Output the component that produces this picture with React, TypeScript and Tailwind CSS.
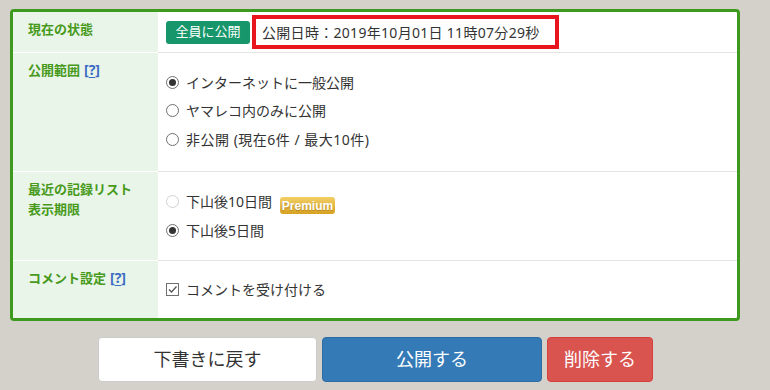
import React from "react";

const font = { fontFamily: '"Noto Sans", "Noto Sans CJK JP", sans-serif' };

function Radio({ checked, disabled }: { checked?: boolean; disabled?: boolean }) {
  return (
    <span
      className={`flex h-[13px] w-[13px] shrink-0 items-center justify-center rounded-full border bg-white ${
        disabled ? "border-[#d0d0d0]" : "border-[#6f6f6f]"
      }`}
    >
      {checked && <span className="h-[7px] w-[7px] rounded-full bg-[#333]" />}
    </span>
  );
}

function Help() {
  return (
    <span className="ml-[4px] text-[14px] text-[#3a6cc4]">
      [<span className="underline underline-offset-2">?</span>]
    </span>
  );
}

function Row({
  label,
  children,
  last,
  height,
}: {
  label: React.ReactNode;
  children: React.ReactNode;
  last?: boolean;
  height: string;
}) {
  return (
    <div className={`flex ${height}`}>
      <div
        className={`w-[145px] shrink-0 bg-[#eaf5e9] pl-[15px] pt-[7px] text-[13px] font-bold leading-[20px] text-[#479a1b] ${
          last ? "" : "border-b border-white"
        }`}
      >
        {label}
      </div>
      <div className={`flex-1 pl-[8px] ${last ? "" : "border-b border-[#e3e3e3]"}`}>{children}</div>
    </div>
  );
}

export default function App() {
  return (
    <div className="h-[390px] w-[770px] bg-[#d4d0ca] pl-[10px] pt-[9px] text-[14px] text-[#333]" style={font}>
      <div className="w-[730px] overflow-hidden rounded-[4px] border-[3px] border-[#3e9a1e] bg-white">
        {/* 現在の状態 */}
        <Row label="現在の状態" height="h-[41px]">
          <div className="flex h-full items-center gap-[2px]">
            <span className="flex h-[23px] w-[84px] items-center justify-center rounded-[3px] bg-[#16966a] text-[13px] text-white">
              全員に公開
            </span>
            <div className="flex h-[34px] w-[307px] items-center border-[4px] border-[#e8141e] pl-[6px] text-[14px] tracking-[0.3px]">
              公開日時：2019年10月01日 11時07分29秒
            </div>
          </div>
        </Row>

        {/* 公開範囲 */}
        <Row
          label={
            <>
              公開範囲
              <Help />
            </>
          }
          height="h-[119px]"
        >
          <div className="flex flex-col pt-[15px]">
            <label className="flex h-[28.5px] items-center gap-[7px]">
              <Radio checked />
              インターネットに一般公開
            </label>
            <label className="flex h-[28.5px] items-center gap-[7px]">
              <Radio />
              ヤマレコ内のみに公開
            </label>
            <label className="flex h-[28.5px] items-center gap-[7px]">
              <Radio />
              <span className="tracking-[0.5px]">非公開 (現在6件 / 最大10件)</span>
            </label>
          </div>
        </Row>

        {/* 表示期限 */}
        <Row
          label={
            <>
              最近の記録リスト
              <br />
              表示期限
            </>
          }
          height="h-[89px]"
        >
          <div className="flex h-full flex-col justify-center">
            <label className="flex h-[29px] items-center gap-[7px]">
              <Radio disabled />
              下山後10日間
              <span
                className="ml-[1px] mt-[8px] flex h-[17px] w-[55px] items-center justify-center rounded-[3px] bg-gradient-to-b from-[#f2cf63] to-[#d8a21f] text-[12px] font-bold text-white"
                style={{ fontFamily: '"Liberation Sans", sans-serif', textShadow: "0 1px 1px rgba(120,80,0,0.45)" }}
              >
                Premium
              </span>
            </label>
            <label className="flex h-[29px] items-center gap-[7px]">
              <Radio checked />
              下山後5日間
            </label>
          </div>
        </Row>

        {/* コメント設定 */}
        <Row
          label={
            <>
              コメント設定
              <Help />
            </>
          }
          height="h-[57px]"
          last
        >
          <div className="flex h-full items-center gap-[7px]">
            <span className="flex h-[13px] w-[13px] items-center justify-center border border-[#6f6f6f] bg-white">
              <svg width="11" height="11" viewBox="0 0 11 11">
                <path d="M2 5.5 L4.5 8 L9.5 2.5" fill="none" stroke="#555" strokeWidth="1.3" />
              </svg>
            </span>
            コメントを受け付ける
          </div>
        </Row>
      </div>

      {/* buttons */}
      <div className="mt-[16px] flex gap-[5px] pl-[88px] text-[18px]">
        <button className="flex h-[45px] w-[219px] items-center justify-center rounded-[4px] border border-[#ccc] bg-white text-[#333]">
          下書きに戻す
        </button>
        <button className="flex h-[45px] w-[220px] items-center justify-center rounded-[4px] border border-[#2e6da4] bg-[#337ab7] text-white">
          公開する
        </button>
        <button className="flex h-[45px] w-[106px] items-center justify-center rounded-[4px] border border-[#d43f3a] bg-[#d9534f] text-white">
          削除する
        </button>
      </div>
    </div>
  );
}
